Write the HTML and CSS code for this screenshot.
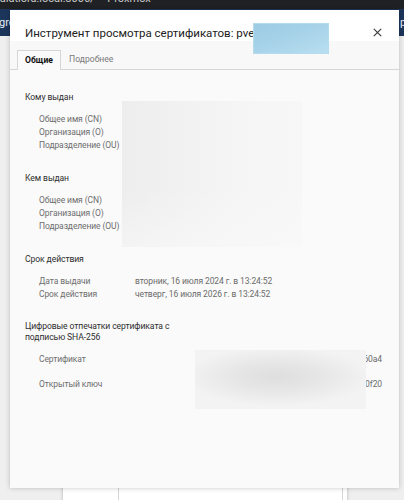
FILE: index.html
```html
<!DOCTYPE html>
<html lang="ru">
<head>
<meta charset="utf-8">
<title>Инструмент просмотра сертификатов</title>
<link rel="stylesheet" href="styles.css">
</head>
<body>
<div class="page">
  <div class="tabbar"><span class="tabbar-text">calatiora.local:8006/ – Proxmox</span></div>
  <div class="navbar">
    <span class="nav-left">groups</span>
    <span class="nav-spacer"></span>
    <span class="nav-right">p</span>
  </div>
  <div class="body">
    <div class="panel">
      <div class="field"></div>
      <div class="field"></div>
    </div>
  </div>

  <div class="dialog">
    <div class="dlg-head">
      <div class="dlg-title">Инструмент просмотра сертификатов: pve</div>
      <svg class="dlg-close" width="9" height="9" viewBox="0 0 9 9"><path d="M0.8 0.8 L8.2 8.2 M8.2 0.8 L0.8 8.2" stroke="#3c3c3c" stroke-width="1.2" fill="none"/></svg>
    </div>
    <div class="redact-title"></div>
    <div class="tabs">
      <div class="tab tab-active">Общие</div>
      <div class="tab">Подробнее</div>
    </div>
    <div class="content">
      <div class="sec">
        <div class="sec-head">Кому выдан</div>
        <div class="rows">
          <div class="row"><span class="lbl">Общее имя (CN)</span></div>
          <div class="row"><span class="lbl">Организация (O)</span></div>
          <div class="row"><span class="lbl">Подразделение (OU)</span></div>
        </div>
      </div>
      <div class="sec">
        <div class="sec-head">Кем выдан</div>
        <div class="rows">
          <div class="row"><span class="lbl">Общее имя (CN)</span></div>
          <div class="row"><span class="lbl">Организация (O)</span></div>
          <div class="row"><span class="lbl">Подразделение (OU)</span></div>
        </div>
      </div>
      <div class="sec">
        <div class="sec-head">Срок действия</div>
        <div class="rows">
          <div class="row"><span class="lbl">Дата выдачи</span><span class="val">вторник, 16 июля 2024 г. в 13:24:52</span></div>
          <div class="row"><span class="lbl">Срок действия</span><span class="val">четверг, 16 июля 2026 г. в 13:24:52</span></div>
        </div>
      </div>
      <div class="sec">
        <div class="sec-head sec-head-2">Цифровые отпечатки сертификата с<br>подписью SHA-256</div>
        <div class="rows rows-fp">
          <div class="row row-fp"><span class="lbl">Сертификат</span><span class="val val-fp">60a4</span></div>
          <div class="row row-fp"><span class="lbl">Открытый ключ</span><span class="val val-fp">0f20</span></div>
        </div>
      </div>
    </div>
    <div class="redact-issued"></div>
    <div class="redact-fp"></div>
  </div>
</div>
</body>
</html>
```
FILE: styles.css
```css
* { box-sizing: border-box; }
html, body { margin: 0; padding: 0; }
body {
  font-family: Roboto, "Noto Sans", sans-serif;
  background: #efefef;
}
.page {
  position: relative;
  width: 404px;
  height: 500px;
  overflow: hidden;
  display: flex;
  flex-direction: column;
}
.tabbar {
  height: 9px;
  background: #202124;
  overflow: hidden;
  flex: none;
}
.tabbar-text {
  display: block;
  margin-top: -8px;
  margin-left: -6px;
  font-size: 11px;
  line-height: 14px;
  color: #c9c9c9;
  white-space: nowrap;
}
.navbar {
  height: 27px;
  background: #1c355a;
  display: flex;
  align-items: center;
  flex: none;
  overflow: hidden;
  color: #e8eef6;
  font-size: 11px;
}
.nav-left { margin-left: -1px; white-space: nowrap; }
.nav-spacer { flex: 1; }
.nav-right { width: 4px; white-space: nowrap; }
.body {
  flex: 1;
  padding-top: 420px;
}
.panel {
  margin-left: 63px;
  width: 284px;
  height: 120px;
  background: #fff;
  box-shadow: -1px 0 3px rgba(0,0,0,.12), 1px 0 3px rgba(0,0,0,.12);
  padding: 28px 4px 0 55px;
  display: flex;
  flex-direction: column;
  gap: 4px;
}
.field {
  height: 22px;
  border: 1px solid #d4d4d4;
  background: #fff;
}

/* dialog */
.dialog {
  position: absolute;
  left: 10px;
  top: 10px;
  width: 389px;
  height: 478px;
  background: #fafafa;
  box-shadow: 0 0 5px rgba(0,0,0,.22);
  color: #333;
}
.dlg-head {
  height: 31px;
  background: #fff;
  display: flex;
  align-items: flex-start;
  padding: 15px 17px 0 15px;
}
.dlg-title {
  font-size: 11.5px;
  line-height: 16px;
  color: #222;
  white-space: nowrap;
}
.dlg-close {
  margin-left: auto;
  margin-top: 3px;
}
.redact-title {
  position: absolute;
  left: 243px;
  top: 13px;
  width: 76px;
  height: 31px;
  background: linear-gradient(160deg, #9ccbe3 0%, #a9d4ea 55%, #b9def0 100%);
  border: 1px solid #b4dbee;
}
.tabs {
  height: 29px;
  padding: 10px 0 0 7px;
  border-bottom: 1px solid #d6d6d6;
  display: flex;
  align-items: flex-end;
  background: #f8f8f8;
}
.tab {
  height: 19px;
  font-size: 8.6px;
  line-height: 18px;
  color: #7a7a7a;
  padding: 0 8px;
}
.tab-active {
  width: 44px;
  padding: 0 0 0 7px;
  border: 1px solid #d6d6d6;
  border-bottom: none;
  background: #fafafa;
  color: #111;
  font-weight: 700;
  margin-bottom: -1px;
  height: 20px;
}
.content {
  padding: 21px 17px 0 15px;
  letter-spacing: -0.1px;
}
.sec + .sec { margin-top: 20px; }
.sec-head {
  font-size: 8.6px;
  line-height: 13px;
  color: #2e2e2e;
}
.sec-head-2 { line-height: 10.5px; }
.rows {
  margin-top: 9px;
  padding-left: 14px;
}
.rows-fp { margin-top: 11px; }
.row {
  display: flex;
  height: 13px;
  font-size: 8.5px;
  line-height: 13px;
  color: #6e6e6e;
  white-space: nowrap;
}
.row-fp { height: 25px; }
.lbl { width: 96px; flex: none; }
.val { color: #6a6a6a; }
.val-fp { margin-left: auto; }
.redact-issued {
  position: absolute;
  left: 112px;
  top: 91px;
  width: 180px;
  height: 146px;
  background:
    linear-gradient(180deg, rgba(250,250,250,0) 60%, rgba(250,250,250,.5) 100%),
    linear-gradient(90deg, #ededed 0%, #f1f1f1 30%, #f5f5f5 65%, #f7f7f7 100%);
}
.redact-fp {
  position: absolute;
  left: 185px;
  top: 340px;
  width: 171px;
  height: 59px;
  background:
    radial-gradient(ellipse 55% 50% at 48% 45%, #dedede 0%, #e6e6e6 45%, rgba(242,242,242,0) 100%),
    #f3f3f3;
}
```
